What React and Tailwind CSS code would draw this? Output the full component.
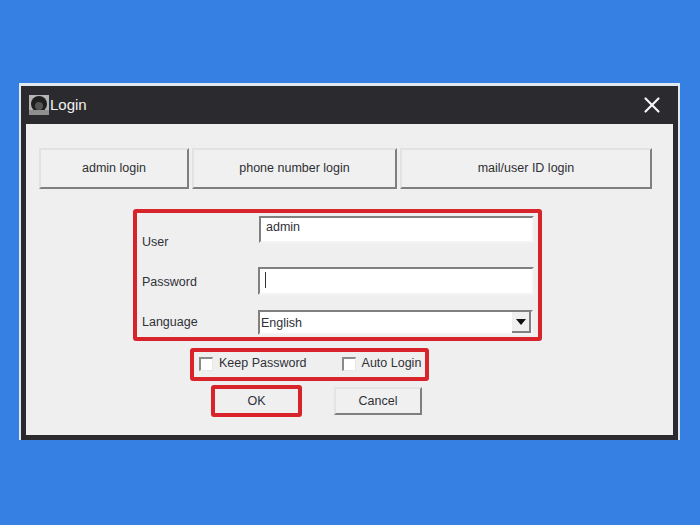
import { X } from 'lucide-react';

const FONT = "font-['Liberation_Sans',sans-serif]";

function TabButton({ label, width }) {
  return (
    <button className={`h-[41px] ${width} bg-[#f0f0f0] border-t-2 border-l-2 border-t-[#e2e2e2] border-l-[#e2e2e2] border-r-2 border-b-2 border-r-[#7f7f7f] border-b-[#7f7f7f] text-[12.5px] text-[#2f2f33]`}>
      {label}
    </button>
  );
}

function Field({ label, inputClass, labelClass, children }) {
  return (
    <div className="flex items-start">
      <div className={`w-[116px] shrink-0 text-[12.5px] leading-[18px] text-[#2f3138] ${labelClass}`}>{label}</div>
      <div className={`bg-white border-t-2 border-l-2 border-t-[#808080] border-l-[#808080] border-r-2 border-b-2 border-r-[#f4f4f4] border-b-[#f4f4f4] ${inputClass}`}>
        {children}
      </div>
    </div>
  );
}

function Check({ label }) {
  return (
    <div className="flex items-center whitespace-nowrap">
      <div className="w-[14px] h-[14px] bg-white border-t-2 border-l-2 border-t-[#8a8a8a] border-l-[#8a8a8a] border-r border-b border-r-[#e8e8e8] border-b-[#e8e8e8]" />
      <span className="ml-[6px] text-[12.5px] text-[#2f3138]">{label}</span>
    </div>
  );
}

export default function App() {
  return (
    <div className={`w-[700px] h-[525px] bg-[#3580e2] pt-[83px] pl-[19px] ${FONT}`}>
      <div className="w-[661px] h-[357px] border-t-[3px] border-l-[2px] border-r-[2px] border-[#dfe9ef] bg-[#2b2a2f] flex flex-col">
        <div className="h-[38px] shrink-0 flex items-center pl-[8px] pr-[13px] text-[#f2f2f2]">
          <svg width="20" height="20" viewBox="0 0 20 20" className="shrink-0">
            <rect width="20" height="20" fill="#b5b5b5" />
            <circle cx="10" cy="9" r="8" fill="#1f1f1f" />
            <circle cx="10" cy="11" r="4" fill="#555" />
            <rect y="15" width="20" height="5" fill="#8f8f8f" />
          </svg>
          <span className="ml-[1px] text-[15px]">Login</span>
          <X className="ml-auto" size={26} strokeWidth={2} color="#f5f5f5" />
        </div>
        <div className="mx-[5px] h-[311px] bg-[#efefef]">
          <div className="flex pt-[24px] pl-[13px] gap-[3px]">
            <TabButton label="admin login" width="w-[150px]" />
            <TabButton label="phone number login" width="w-[205px]" />
            <TabButton label="mail/user ID login" width="w-[252px]" />
          </div>

          <div className="mt-[20px] ml-[107px] w-[409px] h-[132px] border-4 border-[#d8232a] rounded-[3px] pl-[5px] pt-[3px]">
            <Field label="User" labelClass="pt-[17px]" inputClass="w-[275px] h-[27px] ml-[1px] pl-[5px] text-[12.5px] text-[#2f3138] leading-[19px]">
              admin
            </Field>
            <Field label="Password" labelClass="pt-[22px]" inputClass="w-[276px] h-[28px] mt-[16px] pl-[5px] pt-[3px]">
              <div className="w-[1px] h-[16px] bg-[#333]" />
            </Field>
            <Field label="Language" labelClass="pt-[18px]" inputClass="w-[275px] h-[25px] mt-[15px] pl-[1px] text-[12.5px] text-[#2f3138] leading-[22px] flex justify-between">
              English
              <div className="w-[19px] h-[21px] bg-[#efefef] border-r-2 border-b-2 border-r-[#808080] border-b-[#808080] flex items-center justify-center">
                <svg width="10" height="6" viewBox="0 0 10 6"><path d="M0 0h10L5 6z" fill="#111" /></svg>
              </div>
            </Field>
          </div>

          <div className="mt-[7px] ml-[164px] w-[239px] h-[33px] border-4 border-[#d8232a] rounded-[3px] flex items-center pl-[5px] pb-[2px]">
            <Check label="Keep Password" />
            <div className="ml-[35px]"><Check label="Auto Login" /></div>
          </div>

          <div className="mt-[4px] ml-[185px] flex items-center">
            <div className="w-[91px] h-[32px] border-4 border-[#d8232a] rounded-[3px] flex items-center justify-center text-[12.5px] text-[#2f3138]">OK</div>
            <button className="ml-[32px] w-[88px] h-[28px] bg-[#f0f0f0] border-t-2 border-l-2 border-t-[#e4e4e4] border-l-[#e4e4e4] border-r-2 border-b-2 border-r-[#7f7f7f] border-b-[#7f7f7f] text-[12.5px] text-[#2f3138]">Cancel</button>
          </div>
        </div>
      </div>
    </div>
  );
}
